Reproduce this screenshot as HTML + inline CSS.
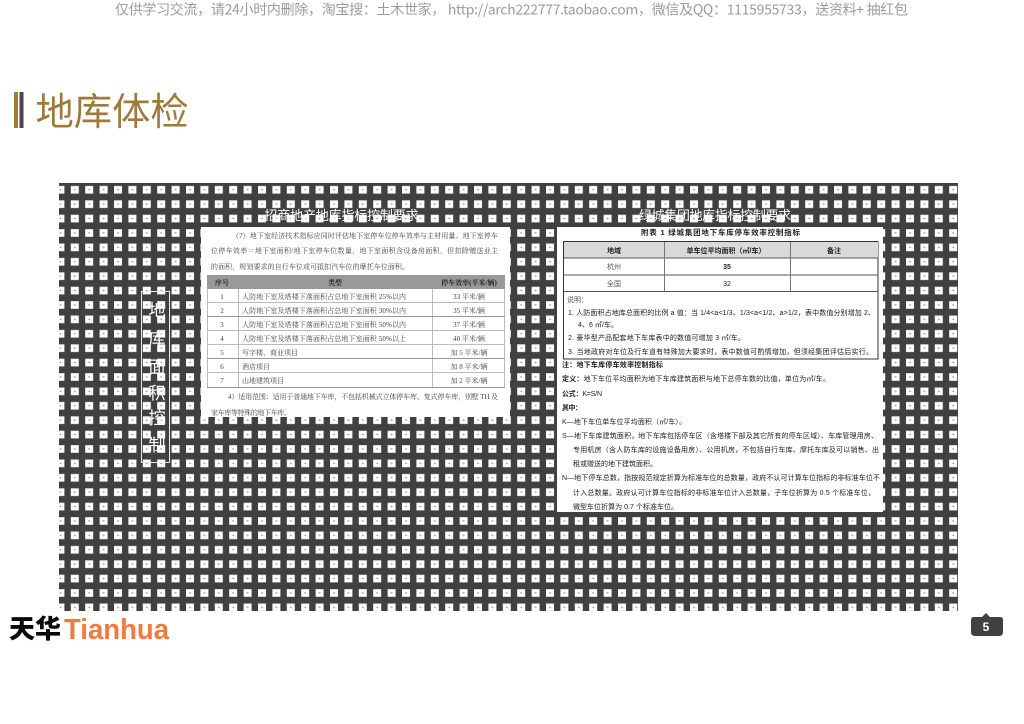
<!DOCTYPE html>
<html><head><meta charset="utf-8"><style>
html,body{margin:0;padding:0;background:#fff;width:1024px;height:724px;overflow:hidden}
svg{display:block}
text{font-family:"Liberation Sans","Noto Sans CJK SC",sans-serif}
.s text{font-family:"Liberation Serif","Noto Serif CJK SC",serif;font-size:7px;fill:#444}
.r text{font-family:"Liberation Sans","Noto Sans CJK SC",sans-serif;font-size:7px;fill:#222}
.s,.r{filter:blur(.3px)}
.b{font-weight:700}
.m{text-anchor:middle}
</style></head><body>
<svg width="1024" height="724" viewBox="0 0 1024 724" xmlns="http://www.w3.org/2000/svg">
<defs>
<pattern id="g" x="56.4" y="185.8" width="14.4" height="14.4" patternUnits="userSpaceOnUse">
<rect width="14.4" height="14.4" fill="#404040"/>
<rect x="0" y="0" width="8" height="7.8" fill="#fff"/>
<path d="M2.8 3.9h2.4M4 2.9v2" stroke="#aaa" stroke-width=".8"/>
<rect x="0" y="0" width="8" height=".6" fill="#ccc"/>
</pattern>
</defs>
<text x="115" y="14.5" fill="#9c9c9c" style="font-family:'WenQuanYi Zen Hei','Noto Sans CJK SC',sans-serif;font-size:14px" textLength="793">仅供学习交流，请24小时内删除，淘宝搜：土木世家， http://arch222777.taobao.com，微信及QQ：1115955733，送资料+ 抽红包</text>

<rect x="14" y="92" width="4" height="36" fill="#a07a3c"/>
<rect x="19.5" y="92" width="4" height="36" fill="#484848"/>
<text x="35.5" y="125" fill="#a07a3c" style="font-family:'Noto Sans CJK SC',sans-serif;font-size:38.3px">地库体检</text>

<rect x="59" y="183" width="899" height="428" fill="url(#g)"/>

<text x="264.5" y="220" fill="#fff" font-size="12.9" textLength="154">招商地产地库指标控制要求</text>
<text x="639" y="220" fill="#fff" font-size="12.9" textLength="152">绿城集团地库指标控制要求</text>

<rect x="141.5" y="291.5" width="28" height="171" fill="none" stroke="#e8e8e8" stroke-width="1"/>
<g fill="#fff" font-size="17">
<text x="157" y="316" class="m">地</text>
<text x="157" y="345" class="m">库</text>
<text x="157" y="373" class="m">面</text>
<text x="157" y="399" class="m">积</text>
<text x="157" y="424" class="m">控</text>
<text x="157" y="451" class="m">制</text>
</g>

<!-- Left panel -->
<rect x="201" y="227" width="309" height="190" fill="#fff"/>
<rect x="207" y="275" width="298" height="14" fill="#999"/>
<g stroke="#bbb" stroke-width="1" fill="none">
<path d="M207 302.5H505M207 330.5H505M207 344.5H505M207 372.5H505"/>
<path d="M207.5 289V388M238.5 289V388M432.5 289V388M504.5 289V388"/>
</g>
<path d="M207 316.5H505M207 358.5H505M207 387.5H505" stroke="#999" fill="none"/>
<g class="s">
<text x="232" y="238" textLength="266">（7）地下室经济技术指标应同时评估地下室停车位停车效率与主材用量。地下室停车</text>
<text x="211" y="253" textLength="287">位停车效率＝地下室面积/地下室停车位数量，地下室面积含设备房面积，但扣除赠送业主</text>
<text x="211" y="269" textLength="198">的面积，规划要求的自行车位或可抵扣汽车位的摩托车位面积。</text>
<text x="222" y="285" class="m b" style="fill:#222">序号</text>
<text x="335" y="285" class="m b" style="fill:#222">类型</text>
<text x="469" y="285" class="m b" style="fill:#222">停车效率(平米/辆)</text>
<text x="222" y="299" class="m">1</text><text x="242" y="299" textLength="164">人防地下室及塔楼下落面积占总地下室面积 25%以内</text><text x="469" y="299" class="m">33 平米/辆</text>
<text x="222" y="313" class="m">2</text><text x="242" y="313" textLength="164">人防地下室及塔楼下落面积占总地下室面积 30%以内</text><text x="469" y="313" class="m">35 平米/辆</text>
<text x="222" y="327" class="m">3</text><text x="242" y="327" textLength="164">人防地下室及塔楼下落面积占总地下室面积 50%以内</text><text x="469" y="327" class="m">37 平米/辆</text>
<text x="222" y="341" class="m">4</text><text x="242" y="341" textLength="164">人防地下室及塔楼下落面积占总地下室面积 50%以上</text><text x="469" y="341" class="m">40 平米/辆</text>
<text x="222" y="355" class="m">5</text><text x="242" y="355">写字楼、商业项目</text><text x="469" y="355" class="m">加 5 平米/辆</text>
<text x="222" y="369" class="m">6</text><text x="242" y="369">酒店项目</text><text x="469" y="369" class="m">加 8 平米/辆</text>
<text x="222" y="383" class="m">7</text><text x="242" y="383">山地建筑项目</text><text x="469" y="383" class="m">加 2 平米/辆</text>
<text x="228" y="399" textLength="270">4）适用范围：适用于普通地下车库，不包括机械式立体停车库、复式停车库，别墅 TH 及</text>
<text x="211" y="415" textLength="80">家车库等特殊的地下车库。</text>
</g>

<!-- Right panel -->
<rect x="557" y="227" width="326" height="285" fill="#fff"/>
<rect x="563.5" y="241.5" width="314.5" height="117.5" fill="#fff" stroke="#333" stroke-width="1"/>
<rect x="564" y="242" width="314" height="16" fill="#d9d9d9"/>
<path d="M564 258H878M564 275H878M564 291.5H878" stroke="#555" fill="none"/>
<path d="M664.5 242V291M790.5 242V291" stroke="#777" fill="none"/>
<g class="r">
<text x="641" y="235" class="b" textLength="159" style="font-size:7.5px">附表 1 绿城集团地下车库停车效率控制指标</text>
<text x="614" y="253" class="m b">地域</text>
<text x="726" y="253" class="m b">单车位平均面积（㎡/车）</text>
<text x="834" y="253" class="m b">备注</text>
<text x="614" y="269" class="m" style="fill:#555">杭州</text><text x="727" y="269" class="m b">35</text>
<text x="614" y="286" class="m" style="fill:#555">全国</text><text x="727" y="286" class="m">32</text>
<text x="567" y="302" style="fill:#555">说明：</text>
<text x="568" y="315" textLength="307">1. 人防面积占地库总面积的比例 a 值：当 1/4&lt;a&lt;1/3、1/3&lt;a&lt;1/2、a&gt;1/2，表中数值分别增加 2、</text>
<text x="578" y="327" textLength="40">4、6 ㎡/车。</text>
<text x="568" y="340" textLength="177">2. 豪华型产品配套地下车库表中的数值可增加 3 ㎡/车。</text>
<text x="568" y="354" textLength="305">3. 当地政府对车位及行车道有特殊加大要求时，表中数值可酌情增加，但须经集团评估后实行。</text>
<text x="562" y="367" class="b" textLength="101">注：地下车库停车效率控制指标</text>
<text x="562" y="381" textLength="268"><tspan class="b">定义：</tspan>地下车位平均面积为地下车库建筑面积与地下总停车数的比值，单位为㎡/车。</text>
<text x="562" y="396" textLength="40"><tspan class="b">公式：</tspan>K=S/N</text>
<text x="562" y="410" class="b" textLength="20">其中：</text>
<text x="562" y="424" textLength="124">K—地下车位单车位平均面积（㎡/车）。</text>
<text x="562" y="438" textLength="316">S—地下车库建筑面积，地下车库包括停车区（含塔楼下部及其它所有的停车区域）、车库管理用房、</text>
<text x="573" y="452" textLength="306">专用机房（含人防车库的设施设备用房）、公用机房，不包括自行车库、摩托车库及可以销售、出</text>
<text x="573" y="466" textLength="84">租或赠送的地下建筑面积。</text>
<text x="562" y="480" textLength="318">N—地下停车总数，指按规范规定折算为标准车位的总数量，政府不认可计算车位指标的非标准车位不</text>
<text x="573" y="495" textLength="302">计入总数量。政府认可计算车位指标的非标准车位计入总数量，子车位折算为 0.5 个标准车位，</text>
<text x="573" y="509" textLength="105">微型车位折算为 0.7 个标准车位。</text>
</g>

<!-- Logo -->
<text x="9" y="638" fill="#0a0a0a" class="b" style="font-family:'Noto Sans CJK SC',sans-serif;font-weight:900;font-size:26px" textLength="52">天华</text>
<text x="64" y="639" fill="#f47a3c" class="b" style="font-family:'Liberation Sans',sans-serif;font-weight:700;font-size:29px" textLength="105" lengthAdjust="spacingAndGlyphs">Tianhua</text>

<!-- Page badge -->
<path d="M974 617H982L986 613L990 617H1000Q1003 617 1003 620V632Q1003 636 999 636H975Q971 636 971 632V620Q971 617 974 617Z" fill="#404040"/>
<text x="986" y="631" class="m b" fill="#fff" font-size="12">5</text>
</svg>
</body></html>
